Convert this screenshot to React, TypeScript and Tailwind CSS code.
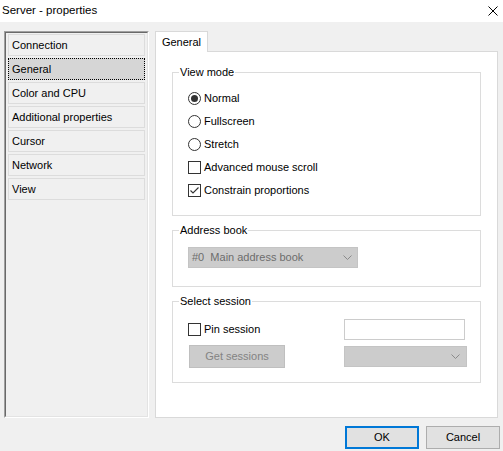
import React from "react";

const font = { fontFamily: '"Liberation Sans", Arial, sans-serif' };

const items = ["Connection", "General", "Color and CPU", "Additional properties", "Cursor", "Network", "View"];

function Radio({ checked, label }: { checked?: boolean; label: string }) {
    return (
        <div className="flex items-center gap-[3px] h-[23px]">
            <svg width="13" height="13" viewBox="0 0 13 13">
                <circle cx="6.5" cy="6.5" r="6" fill="#fff" stroke="#333" strokeWidth="1" />
                {checked && <circle cx="6.5" cy="6.5" r="3.5" fill="#333" />}
            </svg>
            <span>{label}</span>
        </div>
    );
}

function Check({ checked, label }: { checked?: boolean; label: string }) {
    return (
        <div className="flex items-center gap-[3px] h-[23px]">
            <svg width="13" height="13" viewBox="0 0 13 13">
                <rect x="0.5" y="0.5" width="12" height="12" fill="#fff" stroke="#333" strokeWidth="1" />
                {checked && <path d="M2.5 6.5 L5 9 L10.5 3.5" fill="none" stroke="#333" strokeWidth="1.1" />}
            </svg>
            <span>{label}</span>
        </div>
    );
}

function Chevron() {
    return (
        <svg width="9" height="5" viewBox="0 0 9 5">
            <path d="M0.5 0.5 L4.5 4.5 L8.5 0.5" fill="none" stroke="#8a8a8a" strokeWidth="1" />
        </svg>
    );
}

export default function App() {
    return (
        <div className="w-[503px] h-[451px] bg-[#f0f0f0] flex flex-col text-[11px] text-black overflow-hidden" style={font}>
            {/* title bar */}
            <div className="h-[22px] bg-white flex items-center justify-between pl-[2px] pr-[5px]">
                <span className="text-[11.5px]">Server - properties</span>
                <svg width="10" height="10" viewBox="0 0 10 10">
                    <path d="M0.5 0.5 L9.5 9.5 M9.5 0.5 L0.5 9.5" stroke="#000" strokeWidth="1" />
                </svg>
            </div>

            <div className="flex pt-[9px] pl-[4px] gap-[6px]">
                {/* left list */}
                <div className="w-[145px] h-[387px] border-t border-l border-[#a0a0a0] border-r-white border-b-white border-r border-b">
                    <div className="h-full border-t border-l border-[#696969] border-r border-b border-r-[#e3e3e3] border-b-[#e3e3e3] px-[2px] pt-[1px] flex flex-col gap-[2px]">
                        {items.map((it) => (
                            <div
                                key={it}
                                className={
                                    it === "General"
                                        ? "h-[22px] flex items-center pl-[3px] bg-[#d6d6d6] border border-dotted border-black"
                                        : "h-[22px] flex items-center pl-[3px] border border-[#dcdcdc]"
                                }
                            >
                                {it}
                            </div>
                        ))}
                    </div>
                </div>

                {/* tab area */}
                <div className="w-[343px] flex flex-col">
                    <div className="w-[53px] h-[21px] -mb-[1px] relative z-10 bg-white border-t border-l border-r border-[#d9d9d9] flex items-center justify-center">
                        General
                    </div>
                    <div className="h-[367px] bg-white border border-[#d9d9d9] px-[16px] pt-[14px]">
                        <fieldset className="border border-[#dcdcdc] pb-[13px]">
                            <legend className="leading-[13px] ml-[6px] px-[1px]">View mode</legend>
                            <div className="pt-[8px] pl-[15px] flex flex-col">
                                <Radio checked label="Normal" />
                                <Radio label="Fullscreen" />
                                <Radio label="Stretch" />
                                <Check label="Advanced mouse scroll" />
                                <Check checked label="Constrain proportions" />
                            </div>
                        </fieldset>

                        <fieldset className="mt-[8px] border border-[#dcdcdc] pb-[18px]">
                            <legend className="leading-[13px] ml-[6px] px-[1px]">Address book</legend>
                            <div className="pt-[10px] pl-[15px]">
                                <div className="w-[170px] h-[21px] bg-[#cccccc] border border-[#c4c4c4] flex items-center justify-between pl-[3px] pr-[5px] text-[#6d6d6d]">
                                    <span className="whitespace-pre">#0  Main address book</span>
                                    <Chevron />
                                </div>
                            </div>
                        </fieldset>

                        <fieldset className="mt-[8px] border border-[#dcdcdc] pb-[14px]">
                            <legend className="leading-[13px] ml-[6px] px-[1px]">Select session</legend>
                            <div className="pt-[11px] pl-[15px] flex flex-col gap-[5px]">
                                <div className="flex items-center h-[21px]">
                                    <div className="w-[156px]">
                                        <Check label="Pin session" />
                                    </div>
                                    <div className="w-[121px] h-[21px] bg-white border border-[#cccccc]" />
                                </div>
                                <div className="flex items-center h-[23px]">
                                    <div className="w-[156px] pl-[1px]">
                                        <div className="w-[96px] h-[23px] bg-[#cccccc] border border-[#bfbfbf] flex items-center justify-center text-[#838383]">
                                            Get sessions
                                        </div>
                                    </div>
                                    <div className="w-[123px] h-[21px] bg-[#cccccc] border border-[#c4c4c4] flex items-center justify-end pr-[6px]">
                                        <Chevron />
                                    </div>
                                </div>
                            </div>
                        </fieldset>
                    </div>
                </div>
            </div>

            {/* buttons */}
            <div className="flex justify-end gap-[7px] pr-[3px] mt-[8px]">
                <div className="w-[74px] h-[23px] bg-[#e1e1e1] border-2 border-[#0078d7] flex items-center justify-center">OK</div>
                <div className="w-[74px] h-[23px] bg-[#e1e1e1] border border-[#adadad] flex items-center justify-center">Cancel</div>
            </div>
        </div>
    );
}
